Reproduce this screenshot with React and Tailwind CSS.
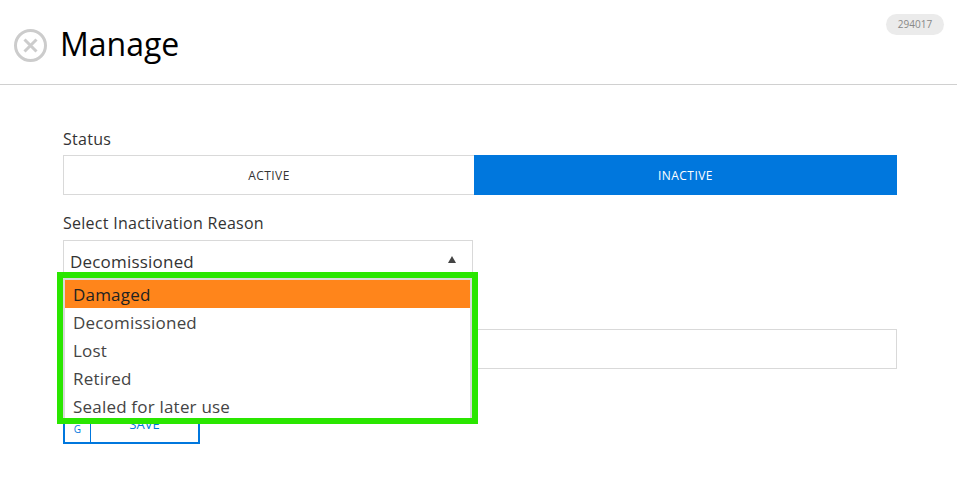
import React from "react";

const options = ["Damaged", "Decomissioned", "Lost", "Retired", "Sealed for later use"];

export default function App() {
  return (
    <div className="w-[957px] h-[487px] bg-white overflow-hidden font-['Open_Sans',sans-serif] text-[#333]">
      <header className="relative h-[85px] border-b border-[#d0d0d0] flex items-start pl-[14px] pt-[23px] gap-[12px]">
        <svg width="34" height="34" viewBox="0 0 34 34" fill="none" className="mt-[6px]">
          <circle cx="16.5" cy="16.5" r="15" stroke="#cccccc" strokeWidth="3" />
          <path d="M10.5 10.5 L22.5 22.5 M22.5 10.5 L10.5 22.5" stroke="#cccccc" strokeWidth="3" />
        </svg>
        <h1 className="text-[32px] leading-[42px] text-black font-normal">Manage</h1>
        <span className="absolute right-[13px] top-[14px] w-[58px] h-[21px] rounded-full bg-[#ebebeb] text-[#888] text-[10px] flex items-center justify-center">
          294017
        </span>
      </header>

      <main className="pl-[63px] pr-[60px] pt-[43px] text-[16px]">
        <label className="block leading-[22px] mb-[5px] tracking-[0.27px]">Status</label>
        <div className="flex h-[40px] text-[12px] tracking-[0.45px]">
          <button className="w-[411px] border border-[#d9d9d9] border-r-0 text-[#333] uppercase pt-px">Active</button>
          <button className="flex-1 bg-[#0077dd] text-white uppercase pt-px">Inactive</button>
        </div>

        <label className="block leading-[22px] mt-[17px] mb-[6px] tracking-[0.27px]">Select Inactivation Reason</label>
        <div className="relative w-[410px]">
          <div className="h-[40px] border border-[#d9d9d9] pl-[6px] pr-[16px] pt-[10px] leading-[22px] text-[17px] tracking-[0.2px] text-[#333] flex justify-between">
            <span>Decomissioned</span>
            <span className="mt-[5px] w-0 h-0 border-x-[4px] border-x-transparent border-b-[7px] border-b-[#444]" />
          </div>
          <div className="absolute left-[-6px] top-[32px] w-[421px] h-[152px] border-[6px] border-[#2ae600] bg-white z-10">
            <ul className="h-full border-l-2 border-r-2 border-t-2 border-[#d9d9d9] text-[17px] tracking-[0.2px]">
              {options.map((o, i) => (
                <li
                  key={o}
                  className={
                    "h-[28px] pl-[8px] pt-px leading-[28px] " +
                    (i === 0 ? "bg-[#ff851b] text-[#222]" : "text-[#444]")
                  }
                >
                  {o}
                </li>
              ))}
            </ul>
          </div>
        </div>

        <div className="mt-[49px] h-[40px] border border-[#d9d9d9]" />

        <div className="mt-[35px] flex w-[137px] h-[40px] border-2 border-[#0077dd] text-[#0077dd] text-[13px]">
          <span className="w-[26px] border-r border-[#0077dd] flex items-end justify-center pb-[5px] text-[10px]">G</span>
          <span className="flex-1 text-center uppercase pt-[9px] leading-[18px]">Save</span>
        </div>
      </main>
    </div>
  );
}
